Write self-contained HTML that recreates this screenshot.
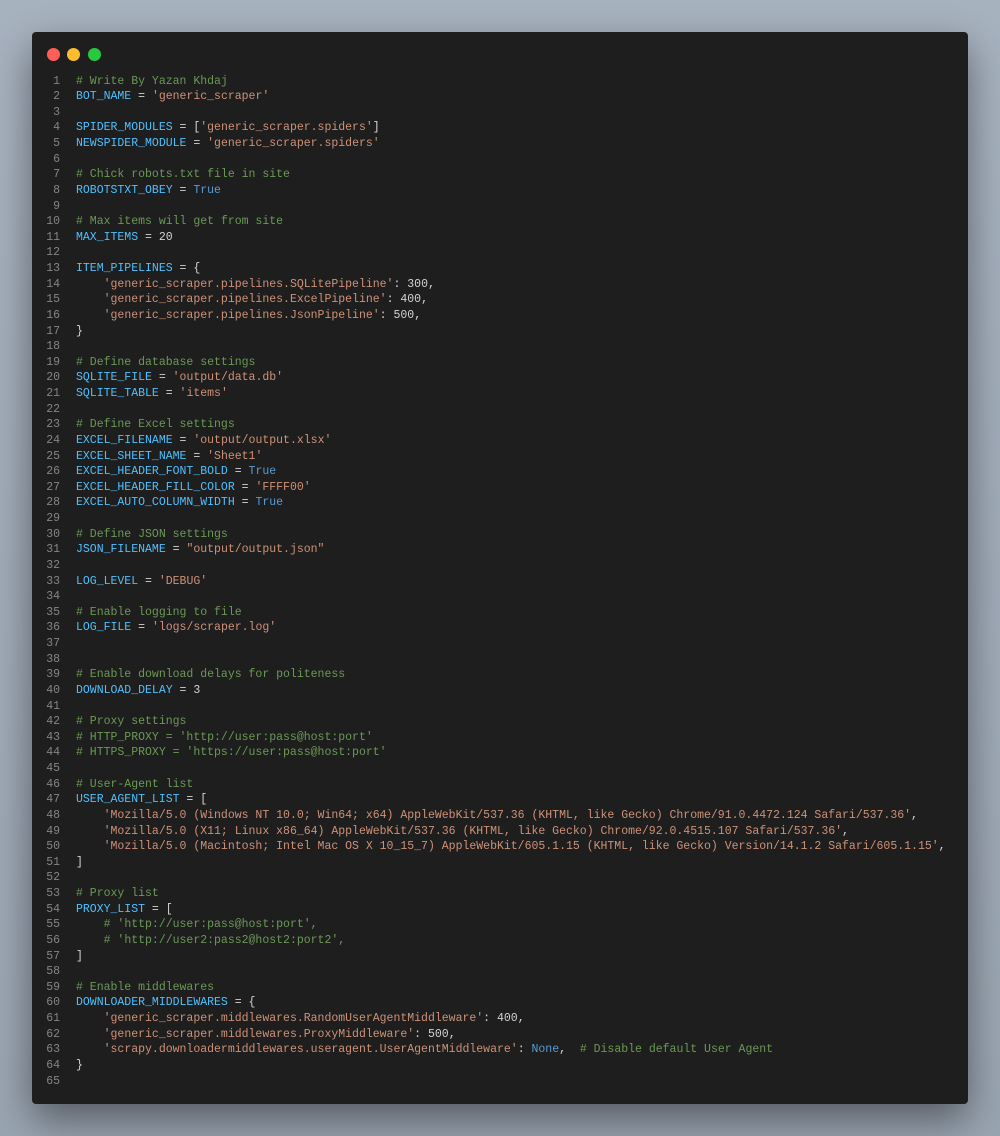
<!DOCTYPE html>
<html><head><meta charset="utf-8"><style>
html,body{margin:0;padding:0;width:1000px;height:1136px;overflow:hidden;background:linear-gradient(180deg,#a7b2bf 0%,#9aa5b2 100%);}
.win{position:absolute;left:32px;top:32px;width:936px;height:1072px;background:#1e1e1e;border-radius:4px;box-shadow:0 16px 40px rgba(0,0,0,0.45);}
.dot{position:absolute;top:16px;width:13px;height:13px;border-radius:50%;}
pre{position:absolute;left:0;top:41.5px;margin:0;font-family:"Liberation Mono",monospace;font-size:11.51px;line-height:15.625px;color:#d4d4d4;}
.ln{display:inline-block;width:28px;text-align:right;color:#858585;margin-right:16px;}
.v{color:#4fc1ff}.s{color:#ce9178}.c{color:#6a9955}.k{color:#569cd6}.n{color:#d4d4d4}
</style></head><body>
<div class="win">
<div class="dot" style="left:15px;background:#ff5f57"></div>
<div class="dot" style="left:35px;background:#febc2e"></div>
<div class="dot" style="left:56px;background:#28c840"></div>
<pre><span class="ln">1</span><span class="c"># Write By Yazan Khdaj</span>
<span class="ln">2</span><span class="v">BOT_NAME</span> = <span class="s">'generic_scraper'</span>
<span class="ln">3</span>
<span class="ln">4</span><span class="v">SPIDER_MODULES</span> = [<span class="s">'generic_scraper.spiders'</span>]
<span class="ln">5</span><span class="v">NEWSPIDER_MODULE</span> = <span class="s">'generic_scraper.spiders'</span>
<span class="ln">6</span>
<span class="ln">7</span><span class="c"># Chick robots.txt file in site</span>
<span class="ln">8</span><span class="v">ROBOTSTXT_OBEY</span> = <span class="k">True</span>
<span class="ln">9</span>
<span class="ln">10</span><span class="c"># Max items will get from site</span>
<span class="ln">11</span><span class="v">MAX_ITEMS</span> = <span class="n">20</span>
<span class="ln">12</span>
<span class="ln">13</span><span class="v">ITEM_PIPELINES</span> = {
<span class="ln">14</span>    <span class="s">'generic_scraper.pipelines.SQLitePipeline'</span>: <span class="n">300</span>,
<span class="ln">15</span>    <span class="s">'generic_scraper.pipelines.ExcelPipeline'</span>: <span class="n">400</span>,
<span class="ln">16</span>    <span class="s">'generic_scraper.pipelines.JsonPipeline'</span>: <span class="n">500</span>,
<span class="ln">17</span>}
<span class="ln">18</span>
<span class="ln">19</span><span class="c"># Define database settings</span>
<span class="ln">20</span><span class="v">SQLITE_FILE</span> = <span class="s">'output/data.db'</span>
<span class="ln">21</span><span class="v">SQLITE_TABLE</span> = <span class="s">'items'</span>
<span class="ln">22</span>
<span class="ln">23</span><span class="c"># Define Excel settings</span>
<span class="ln">24</span><span class="v">EXCEL_FILENAME</span> = <span class="s">'output/output.xlsx'</span>
<span class="ln">25</span><span class="v">EXCEL_SHEET_NAME</span> = <span class="s">'Sheet1'</span>
<span class="ln">26</span><span class="v">EXCEL_HEADER_FONT_BOLD</span> = <span class="k">True</span>
<span class="ln">27</span><span class="v">EXCEL_HEADER_FILL_COLOR</span> = <span class="s">'FFFF00'</span>
<span class="ln">28</span><span class="v">EXCEL_AUTO_COLUMN_WIDTH</span> = <span class="k">True</span>
<span class="ln">29</span>
<span class="ln">30</span><span class="c"># Define JSON settings</span>
<span class="ln">31</span><span class="v">JSON_FILENAME</span> = <span class="s">"output/output.json"</span>
<span class="ln">32</span>
<span class="ln">33</span><span class="v">LOG_LEVEL</span> = <span class="s">'DEBUG'</span>
<span class="ln">34</span>
<span class="ln">35</span><span class="c"># Enable logging to file</span>
<span class="ln">36</span><span class="v">LOG_FILE</span> = <span class="s">'logs/scraper.log'</span>
<span class="ln">37</span>
<span class="ln">38</span>
<span class="ln">39</span><span class="c"># Enable download delays for politeness</span>
<span class="ln">40</span><span class="v">DOWNLOAD_DELAY</span> = <span class="n">3</span>
<span class="ln">41</span>
<span class="ln">42</span><span class="c"># Proxy settings</span>
<span class="ln">43</span><span class="c"># HTTP_PROXY = 'http://user:pass@host:port'</span>
<span class="ln">44</span><span class="c"># HTTPS_PROXY = 'https://user:pass@host:port'</span>
<span class="ln">45</span>
<span class="ln">46</span><span class="c"># User-Agent list</span>
<span class="ln">47</span><span class="v">USER_AGENT_LIST</span> = [
<span class="ln">48</span>    <span class="s">'Mozilla/5.0 (Windows NT 10.0; Win64; x64) AppleWebKit/537.36 (KHTML, like Gecko) Chrome/91.0.4472.124 Safari/537.36'</span>,
<span class="ln">49</span>    <span class="s">'Mozilla/5.0 (X11; Linux x86_64) AppleWebKit/537.36 (KHTML, like Gecko) Chrome/92.0.4515.107 Safari/537.36'</span>,
<span class="ln">50</span>    <span class="s">'Mozilla/5.0 (Macintosh; Intel Mac OS X 10_15_7) AppleWebKit/605.1.15 (KHTML, like Gecko) Version/14.1.2 Safari/605.1.15'</span>,
<span class="ln">51</span>]
<span class="ln">52</span>
<span class="ln">53</span><span class="c"># Proxy list</span>
<span class="ln">54</span><span class="v">PROXY_LIST</span> = [
<span class="ln">55</span>    <span class="c"># 'http://user:pass@host:port',</span>
<span class="ln">56</span>    <span class="c"># 'http://user2:pass2@host2:port2',</span>
<span class="ln">57</span>]
<span class="ln">58</span>
<span class="ln">59</span><span class="c"># Enable middlewares</span>
<span class="ln">60</span><span class="v">DOWNLOADER_MIDDLEWARES</span> = {
<span class="ln">61</span>    <span class="s">'generic_scraper.middlewares.RandomUserAgentMiddleware'</span>: <span class="n">400</span>,
<span class="ln">62</span>    <span class="s">'generic_scraper.middlewares.ProxyMiddleware'</span>: <span class="n">500</span>,
<span class="ln">63</span>    <span class="s">'scrapy.downloadermiddlewares.useragent.UserAgentMiddleware'</span>: <span class="k">None</span>,  <span class="c"># Disable default User Agent</span>
<span class="ln">64</span>}
<span class="ln">65</span>
</pre>
</div>
</body></html>
